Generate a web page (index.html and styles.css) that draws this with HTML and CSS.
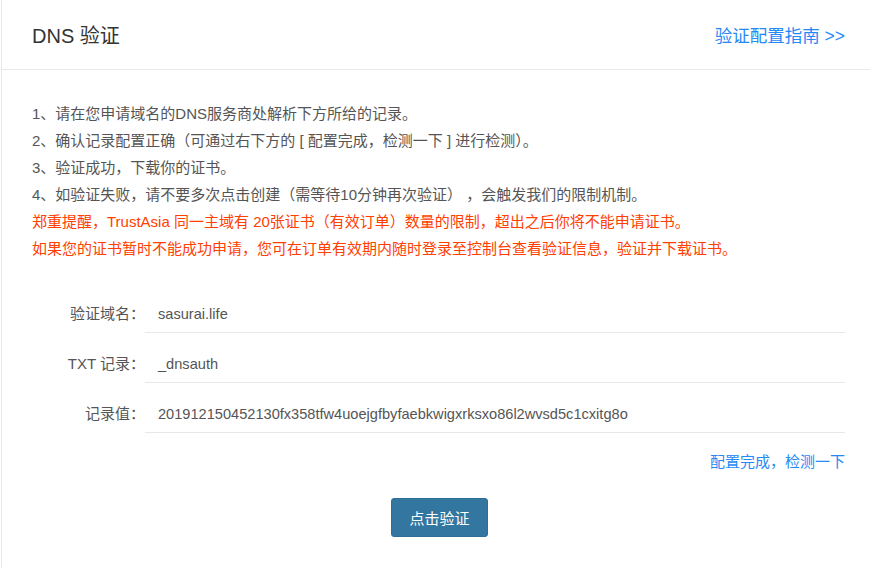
FILE: index.html
```html
<!DOCTYPE html>
<html lang="zh-CN">
<head>
    <meta charset="UTF-8">
    <meta name="viewport" content="width=device-width, initial-scale=1.0">
    <title>DNS 验证</title>
    <link rel="stylesheet" href="styles.css">
</head>
<body>
    <div class="panel">
        <div class="panel-header">
            <h2>DNS 验证</h2>
            <a href="#" class="guide-link">验证配置指南 &gt;&gt;</a>
        </div>

        <div class="panel-body">
            <div class="tips">
                <p>1、请在您申请域名的DNS服务商处解析下方所给的记录。</p>
                <p>2、确认记录配置正确（可通过右下方的 [ 配置完成，检测一下 ] 进行检测）。</p>
                <p>3、验证成功，下载你的证书。</p>
                <p>4、如验证失败，请不要多次点击创建（需等待10分钟再次验证） ，会触发我们的限制机制。</p>
                <p class="warn">郑重提醒，TrustAsia 同一主域有 20张证书（有效订单）数量的限制，超出之后你将不能申请证书。</p>
                <p class="warn">如果您的证书暂时不能成功申请，您可在订单有效期内随时登录至控制台查看验证信息，验证并下载证书。</p>
            </div>

            <div class="record-list">
                <div class="record-row">
                    <span class="record-label">验证域名：</span>
                    <span class="record-value">sasurai.life</span>
                </div>
                <div class="record-row">
                    <span class="record-label">TXT 记录：</span>
                    <span class="record-value">_dnsauth</span>
                </div>
                <div class="record-row">
                    <span class="record-label">记录值：</span>
                    <span class="record-value">201912150452130fx358tfw4uoejgfbyfaebkwigxrksxo86l2wvsd5c1cxitg8o</span>
                </div>
            </div>

            <div class="check-line">
                <a href="#" class="check-link">配置完成，检测一下</a>
            </div>

            <div class="actions">
                <button class="btn-verify">点击验证</button>
            </div>
        </div>
    </div>
</body>
</html>
```

FILE: styles.css
```css
html, body {
    height: 100%;
}
body {
    margin: 0;
    background-color: #fff;
    font-family: "Liberation Sans", "Noto Sans CJK SC", sans-serif;
    color: #555;
}
a {
    text-decoration: none;
}
.panel {
    box-sizing: border-box;
    min-height: 100%;
    margin-left: 1px;
    border-left: 1px solid #e6e6e6;
}
.panel-header {
    display: flex;
    align-items: center;
    justify-content: space-between;
    height: 69px;
    padding: 0 25px 0 30px;
    border-bottom: 1px solid #e8e8e8;
}
.panel-header h2 {
    margin: 0;
    font-size: 20px;
    font-weight: normal;
    color: #333;
}
.guide-link {
    font-size: 17.5px;
    color: #2589f5;
}
.panel-body {
    padding: 30px 25px 0 30px;
}
.tips p {
    margin: 0;
    font-size: 15px;
    line-height: 27px;
}
.tips .warn {
    color: #ff4000;
}
.record-list {
    margin-top: 21px;
}
.record-row {
    display: flex;
    line-height: 20px;
}
.record-label {
    width: 113px;
    flex-shrink: 0;
    padding: 21px 0 9px;
    font-size: 15px;
    text-align: right;
}
.record-value {
    flex: 1;
    padding: 21px 0 8px 13px;
    font-size: 14.6px;
    border-bottom: 1px solid #e8e8e8;
}
.check-line {
    margin-top: 19px;
    text-align: right;
    line-height: 20px;
}
.check-link {
    font-size: 15px;
    color: #2589f5;
}
.actions {
    margin-top: 26px;
    padding-left: 2px;
    text-align: center;
}
.btn-verify {
    width: 97px;
    height: 39px;
    border: 1px solid #2e6f98;
    border-radius: 3px;
    background-color: #33769f;
    color: #fff;
    font-family: inherit;
    font-size: 15px;
    cursor: pointer;
}
.btn-verify:hover {
    background-color: #2c6a90;
}
```
